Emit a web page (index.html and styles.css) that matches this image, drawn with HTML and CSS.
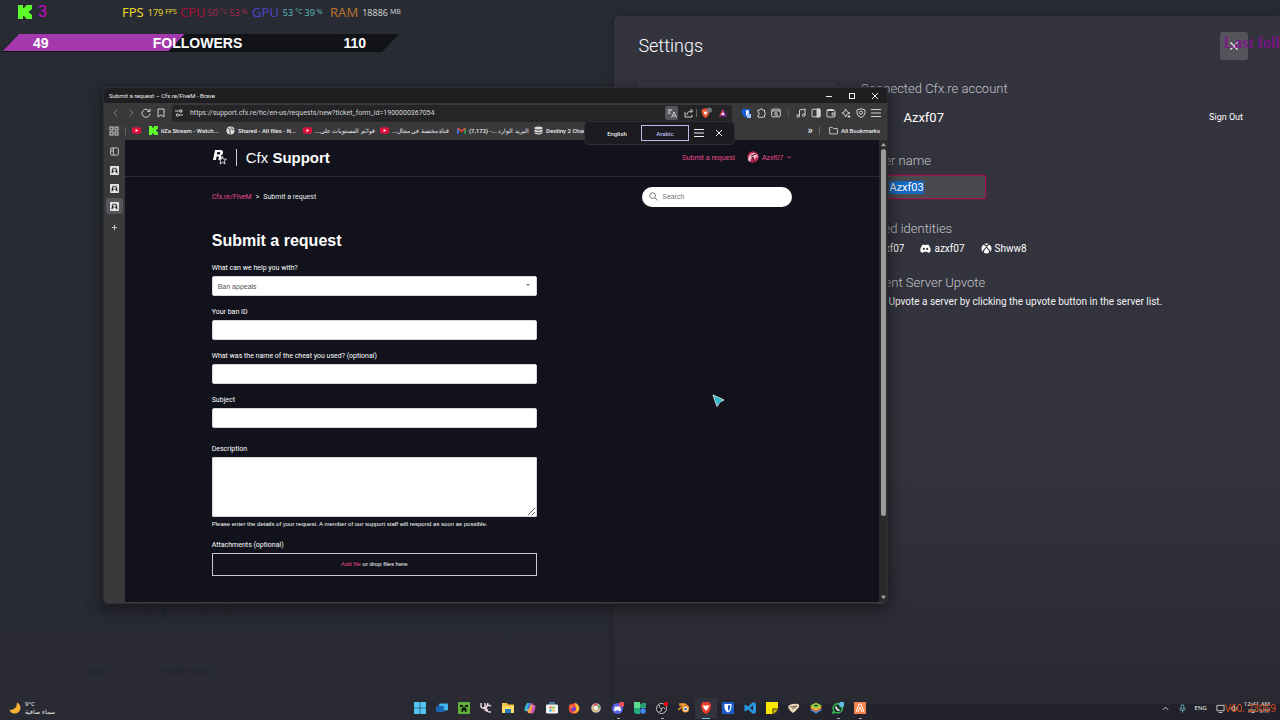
FILE: index.html
```html
<!DOCTYPE html>
<html lang="en">
<head>
<meta charset="utf-8">
<title>Desktop</title>
<link rel="stylesheet" href="styles.css">
</head>
<body>
<svg width="0" height="0" class="defs" aria-hidden="true">
  <symbol id="yt" viewBox="0 0 10 10"><rect x="0" y="1.5" width="10" height="7" rx="2" fill="#e0103a"/><path d="M4 3.4v3.2L6.8 5z" fill="#fff"/></symbol>
  <symbol id="kick" viewBox="0 0 14 14"><path d="M0 0h5v3h1.500V1.500H8V0h6v4.500h-1.500V6H11v2h1.500v1.500H14V14H8v-1.500H6.500V11H5v3H0z" fill="#5cfc2c"/></symbol>
  <symbol id="rage" viewBox="0 0 10 10"><rect width="10" height="10" rx="1" fill="#f2f2f2"/><path d="M1 8 2.500 2h5L9 8H6.300V6.500H3.700V8zM4 3.500v1.500h2V3.500z" fill="#111"/></symbol>
  <symbol id="x" viewBox="0 0 10 10"><path d="m2 2 6 6M8 2 2 8" stroke="currentColor" fill="none"/></symbol>
  <symbol id="menu" viewBox="0 0 10 10"><path d="M0 1.500h10M0 5h10M0 8.500h10" stroke="currentColor" fill="none"/></symbol>
</svg>
<main class="desktop">

  <section class="ghost" aria-hidden="true">
    <p class="ghost-title">Cosmic King of the Hill</p>
    <p class="ghost-row"><span>Legal</span><span>☆ Profile Editor</span></p>
  </section>

  <section class="settings">
    <header class="settings-head">
      <h2>Settings</h2>
      <button class="close" aria-label="Close settings"><svg><use href="#x"/></svg></button>
    </header>
    <div class="settings-body">
      <nav class="settings-nav"></nav>
      <div class="settings-main">
        <h3>Connected Cfx.re account</h3>
        <div class="account"><span class="avatar"></span><span class="account-name">Azxf07</span><button class="signout">Sign Out</button></div>
        <h3><label for="player">Player name</label></h3>
        <input id="player" class="player" value="Azxf03">
        <h3>Linked identities</h3>
        <div class="idents">
          <span class="first-ident">azxf07</span>
          <span><svg viewBox="0 0 12 12"><path d="M2.500 2.200 4.500 1.500l.5.8h2l.5-.8 2 .7L11.500 6v3.500l-2.700 1.300-.8-1.300H4l-.8 1.300L.5 9.500V6z" fill="#fff"/><circle cx="4.200" cy="6.500" r="1.200" fill="#33333d"/><circle cx="7.800" cy="6.500" r="1.200" fill="#33333d"/></svg>azxf07</span>
          <span><svg viewBox="0 0 12 12"><circle cx="6" cy="6" r="5.500" fill="#fff"/><path d="M2.500 1.500C4 1.700 5 2.600 6 3.300c1-.7 2-1.600 3.500-1.800M6 4.500C4 6 2.500 8.500 2.200 11M6 4.500c2 1.500 3.500 4 3.800 6.500" fill="none" stroke="#33333d" stroke-width="1.300"/></svg>Shww8</span>
        </div>
        <h3>Current Server Upvote</h3>
        <p class="upvote">Upvote a server by clicking the upvote button in the server list.</p>
      </div>
    </div>
  </section>

  <aside class="hud">
    <div class="hud-row">
      <svg class="hud-k"><use href="#kick"/></svg><b class="hud-3">3</b>
      <span class="stat fps"><b>FPS</b><i>179</i><small>FPS</small></span>
      <span class="stat cpu"><b>CPU</b><i>50</i><small>°C</small><i>53</i><small>%</small></span>
      <span class="stat gpu"><b>GPU</b><i>53</i><small>°C</small><i>39</i><small>%</small></span>
      <span class="stat ram"><b>RAM</b><i>18886</i><small>MB</small></span>
    </div>
    <div class="goal"><span>49</span><span>FOLLOWERS</span><span>110</span></div>
  </aside>
  <p class="last-follow">Last foll</p>

  <section class="window">
    <header class="titlebar">
      <span>Submit a request – Cfx.re/FiveM - Brave</span>
      <span class="winbtns">
        <button aria-label="Minimize"><svg viewBox="0 0 10 10"><path d="M2 5.500h6" stroke="currentColor"/></svg></button>
        <button aria-label="Maximize"><svg viewBox="0 0 10 10"><rect x="2.500" y="2.500" width="5" height="5" fill="none" stroke="currentColor"/></svg></button>
        <button aria-label="Close"><svg><use href="#x"/></svg></button>
      </span>
    </header>
    <div class="toolbar">
      <button class="dim" aria-label="Back"><svg viewBox="0 0 10 10"><path d="M6.500 1.500 3 5l3.500 3.500"/></svg></button>
      <button class="dim" aria-label="Forward"><svg viewBox="0 0 10 10"><path d="M3.500 1.500 7 5 3.500 8.500"/></svg></button>
      <button aria-label="Reload"><svg viewBox="0 0 10 10"><path d="M8.300 3A4 4 0 1 0 9 5.500M9 .8v2.700H6.300"/></svg></button>
      <button aria-label="Bookmark"><svg viewBox="0 0 10 10"><path d="M2 1h6v8L5 6.800 2 9z"/></svg></button>
      <div class="urlbar">
        <svg viewBox="0 0 10 10"><path d="M1 3h4M9 7H5M6.500 3H8M2 7h.5"/><circle cx="6.800" cy="3" r="1.300"/><circle cx="3.500" cy="7" r="1.300"/></svg>
        <input class="url" aria-label="Address" value="https://support.cfx.re/hc/en-us/requests/new?ticket_form_id=1900000367054">
        <button class="translate-btn" aria-label="Translate"><svg viewBox="0 0 10 10"><path d="M.5 2h5M3 1v1c0 2-1 3.500-2.500 4M1.500 3.500C2 5 3 5.500 4 6M4.500 9.500 7 4l2.500 5.500M5.300 8h3.400"/></svg></button>
        <button aria-label="Share"><svg viewBox="0 0 10 10"><path d="M1 4v5h7V7M3 7c0-3 2-4 5.500-4M6.500 1l2 2-2 2"/></svg></button>
        <span class="sep"></span>
        <button class="wide" aria-label="Shields"><svg viewBox="0 0 12 12"><path d="m2 2.500 2-1h3l2 1 .5 2L8 9l-2.500 2L3 9 1.500 4.500z" fill="#f0562c" stroke="none"/><path d="m3.500 4 2 1 2-1-1 3-1 1-1-1z" fill="#fff" stroke="none"/><circle cx="9.300" cy="3" r="2.600" fill="#77777b" stroke="none"/></svg></button>
        <button aria-label="Rewards"><svg viewBox="0 0 10 10"><path d="M5 1 1 8.500h8z" fill="#8a2ba6" stroke="none"/><path d="M5 1v4L1 8.500z" fill="#f04a28" stroke="none"/><path d="m5 4 1.600 3H3.400z" fill="#fff" stroke="none"/></svg></button>
      </div>
      <button aria-label="Bitwarden"><svg viewBox="0 0 10 10"><path d="M1 1h8v4.500Q8 8 5 9.500 2 8 1 5.500z" fill="#175ddc" stroke="none"/><path d="M5 2.200h2.700v3Q7 7 5 8z" fill="#fff" stroke="none"/><rect x="6" y="6" width="4" height="4" fill="#9cc4ff" stroke="none"/></svg></button>
      <button aria-label="Extensions"><svg viewBox="0 0 10 10"><path d="M2 2h2a1.200 1.200 0 0 1 2.400 0H8.500v2.500a1.100 1.100 0 0 1 0 2.200V9.200H2V7a1.300 1.300 0 0 0 0-2.600z"/></svg></button>
      <button aria-label="Tab search"><svg viewBox="0 0 10 10"><rect x=".7" y="1.200" width="8.600" height="7.600" rx="1"/><path d="M1 3h8M6 7l1 1"/><circle cx="5" cy="5.800" r="1.300"/></svg></button>
      <span class="sep gap"></span>
      <button aria-label="Music"><svg viewBox="0 0 10 10"><path d="M3.500 8V2L9 1v6"/><circle cx="2.200" cy="8" r="1.300"/><circle cx="7.700" cy="7.200" r="1.300"/></svg></button>
      <button aria-label="Side panel"><svg viewBox="0 0 10 10"><rect x="1" y="1.200" width="8" height="7.600" rx=".8"/><path d="M6 1h3v8H6z" fill="currentColor"/></svg></button>
      <button aria-label="Wallet"><svg viewBox="0 0 10 10"><path d="M1 2.500V8q0 1 1 1h6q1 0 1-1V3.500q0-1-1-1H1q0-1 1-1h5.500M9 5H6v2h3"/></svg></button>
      <button aria-label="Leo"><svg viewBox="0 0 10 10"><path d="M4.500 1 6 3.700 9 5 6 6.300 4.500 9 3.500 6.300 1 5l2.500-1.300z"/><path d="M8 7v3M6.500 8.500h3"/></svg></button>
      <button aria-label="VPN"><svg viewBox="0 0 10 10"><path d="M5 .7 9 2v3q0 3-4 4.500Q1 8 1 5V2z"/><circle cx="5" cy="4.700" r="1.600"/></svg></button>
      <button aria-label="Menu"><svg><use href="#menu"/></svg></button>
    </div>
    <nav class="bookmarks">
      <button aria-label="Apps"><svg viewBox="0 0 10 10"><rect x="1" y="1" width="3" height="3"/><rect x="6" y="1" width="3" height="3"/><rect x="1" y="6" width="3" height="3"/><rect x="6" y="6" width="3" height="3"/></svg></button>
      <span class="sep"></span>
      <a class="lone" href="#" aria-label="YouTube"><svg><use href="#yt"/></svg></a>
      <a href="#"><svg><use href="#kick"/></svg><span>iiZa Stream - Watch...</span></a>
      <a href="#"><svg viewBox="0 0 10 10"><circle cx="5" cy="5" r="4.500" fill="#ddd"/><path d="M2 2.500 5 4 4 6l1 3M6 1.500 7 4l2 .5" fill="none" stroke="#444"/></svg><span>Shared - All files - N...</span></a>
      <a href="#"><svg><use href="#yt"/></svg><span dir="rtl">قوائم المستويات على...</span></a>
      <a href="#"><svg><use href="#yt"/></svg><span dir="rtl">قناة مختصة في مجال...</span></a>
      <a href="#"><svg viewBox="0 0 10 10"><path d="M1 8.500v-6" stroke="#4285f4" stroke-width="1.800"/><path d="M9 8.500v-6" stroke="#34a853" stroke-width="1.800"/><path d="m1 2.500 4 3.300 4-3.300" fill="none" stroke="#ea4335" stroke-width="1.800"/></svg><span dir="rtl">البريد الوارد ...- (7,172)</span></a>
      <a href="#"><svg viewBox="0 0 10 10"><ellipse cx="5" cy="2.200" rx="4.500" ry="1.700" fill="#ddd"/><path d="M.5 4q4.500 2.500 9 0v2q-4.500 2.500-9 0zM.5 7q4.500 2.500 9 0v1q-4.500 3-9 0z" fill="#ddd"/></svg><span>Destiny 2 Char</span></a>
      <a class="late" href="#"><span dir="rtl">تمت مفتا</span></a>
      <button class="more" aria-label="More bookmarks">»</button>
      <span class="sep"></span>
      <a class="all" href="#"><svg viewBox="0 0 10 10"><path d="M.7 8.800V1.500h3L5 2.800h4.300v6z" fill="none" stroke="#ccc"/></svg><span>All Bookmarks</span></a>
    </nav>
    <div class="view">
      <nav class="tabs">
        <button aria-label="Toggle tabs"><svg viewBox="0 0 10 10"><rect x=".7" y="1" width="8.600" height="8" rx="1"/><path d="M3.800 1v8M1.500 3h1.500M1.500 5h1.500"/></svg></button>
        <button aria-label="Tab 1"><svg><use href="#rage"/></svg></button>
        <button aria-label="Tab 2"><svg><use href="#rage"/></svg></button>
        <button class="active" aria-label="Tab 3"><svg><use href="#rage"/></svg></button>
        <button aria-label="New tab"><svg viewBox="0 0 10 10"><path d="M5 2v6M2 5h6"/></svg></button>
      </nav>
      <div class="page">
        <header class="site-head">
          <div class="wrap">
            <a class="brand" href="#"><svg viewBox="0 0 15 16"><path d="M3 1h5.500q3 0 2.500 3-.4 2-2.400 2.500Q10 7 9.500 9L9 11H6.500l.5-2.500Q7 7.500 6 7.500H4.500L4 11H1zM5.300 3l-.5 2.500h2q1.300 0 1.500-1.200Q8.500 3 7.300 3z" fill="#fff"/><path d="m10.500 7.500 1 2.700h3l-2.300 1.800.8 3-2.500-1.700L8 15l.8-3-2.300-1.800h3z" fill="#11121b" stroke="#fff" stroke-width=".8"/></svg><i></i><span>Cfx <b>Support</b></span></a>
            <nav class="user"><a href="#">Submit a request</a><a href="#"><svg viewBox="0 0 12 12"><circle cx="6" cy="6" r="5.700" fill="#b92850"/><path d="M1 9Q2 2 7 2q4 1 4 5L9 5.500 8 9 6 5 4 8 3 11z" fill="#f4c4cf"/><path d="m5 6 3 5M9 3l-5 2" stroke="#471125"/></svg>Azxf07<svg class="chev" viewBox="0 0 6 6"><path d="m1 2.500 2 1.500 2-1.500" fill="none" stroke="currentColor" stroke-width=".8"/></svg></a></nav>
          </div>
        </header>
        <div class="wrap sub">
          <p class="crumbs"><a href="#">Cfx.re/FiveM</a><span>&gt;</span><span>Submit a request</span></p>
          <label class="search"><svg viewBox="0 0 10 10"><circle cx="4" cy="4" r="3.200"/><path d="m6.500 6.500 3 3"/></svg><input type="search" placeholder="Search" aria-label="Search"></label>
        </div>
        <div class="wrap">
          <form class="form">
            <h1>Submit a request</h1>
            <div class="field"><label for="topic">What can we help you with?</label><span class="pick"><select id="topic"><option>Ban appeals</option></select></span></div>
            <div class="field"><label for="ban">Your ban ID</label><input id="ban"></div>
            <div class="field"><label for="cheat">What was the name of the cheat you used? (optional)</label><input id="cheat"></div>
            <div class="field"><label for="subject">Subject</label><input id="subject"></div>
            <div class="field desc"><label for="desc">Description</label><textarea id="desc"></textarea><p>Please enter the details of your request. A member of our support staff will respond as soon as possible.</p></div>
            <div class="field"><span class="lab">Attachments (optional)</span><div class="drop"><a href="#">Add file</a> or drop files here</div></div>
          </form>
        </div>
      </div>
      <div class="scroll" aria-hidden="true"><svg viewBox="0 0 6 6"><path d="m3 1 3 4H0z" fill="#aaa"/></svg><i></i><svg viewBox="0 0 6 6"><path d="m3 5 3-4H0z" fill="#aaa"/></svg></div>
    </div>
    <div class="translate"><button>English</button><button class="on">Arabic</button><button class="ic" aria-label="Options"><svg><use href="#menu"/></svg></button><button class="ic" aria-label="Close"><svg><use href="#x"/></svg></button></div>
  </section>

  <svg class="cursor" viewBox="0 0 13 14"><path d="m1 1 11 5-4 2-3 4.500z" fill="#2cb6c9" stroke="#c9dde2"/><path d="m8 8 3.500-1.500-3 1.500L5.500 12z" fill="#3b6b75"/></svg>

  <footer class="taskbar">
    <button class="weather"><svg viewBox="0 0 12 12"><path d="M8 .5Q8 8 .5 8 2 12 6 11.500 11 11 11.500 6 11.500 2 8 .5z" fill="#f5b133"/></svg><span>9°C<br><bdi>سماء صافية</bdi></span></button>
    <nav class="apps">
      <button aria-label="Start"><svg viewBox="0 0 12 12"><path d="M0 0h5.700v5.700H0zM6.300 0H12v5.700H6.300zM0 6.300h5.700V12H0zM6.300 6.300H12V12H6.300z" fill="#52c4f5"/></svg></button>
      <button aria-label="Remote"><svg viewBox="0 0 12 12"><rect x="3" y="1.500" width="9" height="7" rx="1" fill="#42b5ef"/><rect x="0" y="4" width="8" height="6" rx="1" fill="#1767b4"/></svg></button>
      <button aria-label="Minecraft"><svg viewBox="0 0 12 12"><path d="M0 0h12v12H0z" fill="#60ae3c"/><path d="M2 3h3v2H2zM7 3h3v2H7zM5 5h2v1h1.500v4H7V8.500H5V10H3.500V6H5z" fill="#121c0d"/></svg></button>
      <button aria-label="UC"><svg viewBox="0 0 12 12"><path d="M1 1v3q0 2 2 2t2-2V1M11 4Q7 2 6 6q-1 4 5 4M3 6l5 2M8 1 5 9" fill="none" stroke="#e6d3d8" stroke-width="1.500"/></svg></button>
      <button aria-label="Files"><svg viewBox="0 0 12 12"><path d="M0 1h5l1 1.500h6V11H0z" fill="#f6c443"/><path d="M0 4h12v7H0z" fill="#ffda66"/><path d="M3 7h6v4H3z" fill="#2a7ab8"/></svg></button>
      <button aria-label="Copilot"><svg viewBox="0 0 12 12"><path d="M3 1h4L4.500 9H1Q0 8 1 5z" fill="#3cbdd4"/><path d="M7 1q2 0 2 2h2q1 1 0 4l-1 3q-1 1.500-3 1.500H5z" fill="#d158bd"/><path d="M5 3h4L6.500 11H4Q3 10 3.500 8z" fill="#f3a33e"/><path d="M5 1h2l-2 6H3z" fill="#4675e8"/></svg></button>
      <button aria-label="Store"><svg viewBox="0 0 12 12"><path d="M4 3V.7h4V3" fill="none" stroke="#60b8e9"/><rect y="2.500" width="12" height="9" rx="1" fill="#eef3f6"/><path d="M3.500 4.500h2v2h-2z" fill="#f35325"/><path d="M6.500 4.500h2v2h-2z" fill="#81bc06"/><path d="M3.500 7.500h2v2h-2z" fill="#05a6f0"/><path d="M6.500 7.500h2v2h-2z" fill="#ffba08"/></svg></button>
      <button aria-label="Firefox"><svg viewBox="0 0 12 12"><circle cx="6" cy="6.500" r="5.300" fill="#f54b37"/><path d="M7 .5q5 3 4.300 7Q9 12 5 10.500 9 9 7.500 5z" fill="#ffb82c"/><circle cx="5.500" cy="6.700" r="2.500" fill="#8139c9"/><path d="m1 2 2 1.500 3 1-3 2z" fill="#ff8928"/></svg></button>
      <button aria-label="Paint"><svg viewBox="0 0 12 12"><circle cx="6" cy="6" r="4.800" fill="#cdbfae"/><path d="m2 3 4-2 2 3z" fill="#d4535f"/><path d="m8 2 3 3-3 2z" fill="#62a868"/><path d="m2 6 3 4 2-3z" fill="#e5bd49"/><circle cx="6" cy="6" r="2" fill="#f4f4f4"/></svg></button>
      <button class="run" aria-label="Discord"><svg viewBox="0 0 12 12"><circle cx="5.500" cy="6.500" r="5.500" fill="#5661e9"/><path d="m3 4.500 5 0 1.200 4-2 .8-.7-1h-2l-.7 1-2-.8z" fill="#fff"/><circle cx="9.800" cy="2.200" r="2.700" fill="#e95160"/></svg></button>
      <button aria-label="Widgets"><svg viewBox="0 0 12 12"><path d="M0 0h6v6H0z" fill="#5edb91"/><path d="M6 2q5-2 6-1v5H6z" fill="#2d9d72"/><path d="M0 6h6v6q-6 0-6-2z" fill="#26aa7c"/><circle cx="9" cy="9" r="2.800" fill="#3d8bf2"/></svg></button>
      <button class="run" aria-label="OBS"><svg viewBox="0 0 12 12"><circle cx="5.500" cy="6.500" r="5" fill="#191a1f" stroke="#c9c9ce"/><path d="M5.500 6.500Q2 6 4 3M5.500 6.500Q8 4 9 7M5.500 6.500q1 3-2 3" fill="none" stroke="#c9c9ce"/><circle cx="10" cy="2" r="2.300" fill="#e60613"/></svg></button>
      <button aria-label="Blender"><svg viewBox="0 0 12 12"><path d="M0 8 6 3H2V2h5l4 3.500" fill="none" stroke="#f39a35" stroke-width="1.600"/><circle cx="7.500" cy="7" r="3.500" fill="#f39a35"/><circle cx="7.500" cy="7" r="2.200" fill="#fff"/><circle cx="7.500" cy="7" r="1.300" fill="#265787"/></svg></button>
      <button class="run on" aria-label="Brave"><svg viewBox="0 0 12 12"><path d="m1 2 2.500-2h5L11 2v3L9 10l-3 2-3-2-2-5z" fill="#e93c2c"/><path d="m3 3 3 .7L9 3 8.500 6 7 7.500 6 9 5 7.500 3.500 6z" fill="#fff"/></svg></button>
      <button aria-label="Bitwarden"><svg viewBox="0 0 12 12"><rect width="12" height="12" rx="1" fill="#1c5dcc"/><path d="M2.500 2h7v4Q9 9 6 10.500 3 9 2.500 6z" fill="#fff"/><path d="M6 3.200h2.300V6Q8 7.700 6 9z" fill="#1c5dcc"/></svg></button>
      <button aria-label="VS Code"><svg viewBox="0 0 12 12"><path d="M9 0 12 1.500v9L9 12 4 7.500 1.500 9.500.5 9V3l1-.5L4 4.500zM9 3.500 6 6l3 2.500z" fill="#2596dd"/></svg></button>
      <button aria-label="Notes"><svg viewBox="0 0 12 12"><path d="M0 0h12v12H0z" fill="#fde900"/><path d="M6.500 6.500H12V12H6.500z" fill="#33301c"/><path d="M7.500 7.500H12L7.500 12z" fill="#e0bd13"/></svg></button>
      <button aria-label="Shell"><svg viewBox="0 0 12 12"><path d="M0 5q2-4 10-3 2 1 1 3L7 9.500 4.500 11Q1 8 0 5z" fill="#ead9bd"/><path d="m2 5 7-1-5 3" fill="none" stroke="#766350"/></svg></button>
      <button aria-label="BlueStacks"><svg viewBox="0 0 12 12"><path d="m0 8 6-2.500L12 8l-6 3.500z" fill="#3293df"/><path d="m0 6.500 6-2.500 6 2.500L6 10z" fill="#e9573b"/><path d="m0 5 6-2.500L12 5 6 8.500z" fill="#f3cf3c"/><path d="m0 3.500 6-3 6 3-6 3.500z" fill="#88c93d"/><path d="m4 3.500 2-1 2 1-2 1z" fill="#263a17"/></svg></button>
      <button class="run" aria-label="WhatsApp"><svg viewBox="0 0 12 12"><path d="m0 12 1-3.500A5.300 5.300 0 1 1 3.500 11z" fill="#34c759"/><circle cx="5.600" cy="6.400" r="3.900" fill="#1c3a2a"/><path d="M4 4.500q0 3 3.500 4" fill="none" stroke="#fff" stroke-width="1.500"/><circle cx="9.700" cy="2.500" r="2.800" fill="#62bde8"/></svg></button>
      <button class="run" aria-label="Launcher"><svg viewBox="0 0 12 12"><rect width="12" height="12" fill="#f3824c"/><path d="M2 10 5 2h2l3 8M4 10l2-5 2 5" fill="none" stroke="#fff"/></svg></button>
    </nav>
    <div class="tray">
      <svg viewBox="0 0 10 10"><path d="m2 6.500 3-3 3 3"/></svg>
      <svg class="mic" viewBox="0 0 10 10"><rect x="3.500" y=".7" width="3" height="5" rx="1.500"/><path d="M2 4.500Q2 7.500 5 7.500T8 4.500M5 7.500v2"/></svg>
      <span class="lang">ENG</span>
      <svg viewBox="0 0 10 10"><path d="M1 1.500h8v6H1zM3 9.500h4"/></svg>
      <svg viewBox="0 0 10 10"><path d="M1 4h2l2-2v6L3 6H1zM7 3q2 2 0 4"/></svg>
      <span class="clock">12:41 AM<br>٢٥/٠٧/٢٣</span>
      <span class="orange">V60. 23069</span>
    </div>
  </footer>
</main>
<script>
  document.getElementById("player").select();
</script>
</body>
</html>
```
FILE: styles.css
```css
* { box-sizing: border-box; }
body { margin: 0; font-family: Roboto, "Noto Sans", sans-serif; color: #eee; }
h1, h2, h3, p { margin: 0; font-weight: 400; }
button { background: none; border: 0; padding: 0; color: inherit; font: inherit; display: flex; align-items: center; justify-content: center; }
a { color: inherit; text-decoration: none; }
input, textarea, select { font: inherit; outline: 0; }
svg { flex: none; }
.defs { position: absolute; }

.desktop { position: relative; height: 100vh; overflow: hidden; background: linear-gradient(#282b33, #292b34 60%, #292a34); }

.ghost { position: absolute; left: 82px; top: 600px; color: #23252d; font-size: 15px; }
.ghost-row { display: flex; gap: 40px; margin-top: 48px; font-size: 10px; }

/* settings panel */
.settings { position: absolute; left: 48%; right: 0; top: 16px; bottom: 16px; padding: 15px 32px 0 24px; border-radius: 5px 0 0 0; background: linear-gradient(#33343e, #33333d 65%, #2c2c36 90%, #292932); box-shadow: 0 0 8px #22232a; }
.settings-head { display: flex; justify-content: space-between; align-items: center; height: 29px; }
.settings-head h2 { font-size: 18px; font-weight: 300; color: #fff; }
.close { width: 28px; height: 28px; border-radius: 3px; background: #54555b; color: #fff; }
.close svg { width: 12px; height: 12px; }
.settings-body { display: grid; grid-template-columns: 198px 1fr; gap: 24px; padding-top: 21px; }
.settings-nav { height: 20px; margin-top: 2px; background: #3d3e46; }
.settings-main h3 { font-size: 13px; line-height: 16px; font-weight: 300; color: #c4c4ca; }
.account { display: flex; align-items: center; gap: 17px; height: 40px; margin-bottom: 16px; padding-right: 5px; font-size: 13px; color: #fff; }
.avatar { width: 26px; height: 26px; background: #a55; }
.signout { margin-left: auto; font-size: 9px; }
.player { display: block; width: 126px; height: 24px; margin: 6px 0 22px; padding: 0 0 0 28px; border: 1px solid #a3144c; border-radius: 2px; background: #4a4a4e; box-shadow: 0 0 2px #a3144c; color: #fff; font-size: 11px; }
.player::selection { background: #1769c4; color: #fff; }
.idents { display: flex; gap: 16px; height: 22px; margin-bottom: 16px; align-items: center; font-size: 10px; color: #fff; }
.idents span { display: flex; align-items: center; gap: 3px; }
.idents svg { width: 11px; height: 11px; }
.idents .first-ident { padding-left: 14px; }
.upvote { padding: 5px 0 0 28px; font-size: 10px; color: #f2f2f2; }

/* stream overlays */
.hud { position: absolute; left: 0; top: 0; width: 402px; }
.hud-row { display: flex; align-items: center; height: 24px; padding-left: 18px; font-family: "Noto Sans", sans-serif; }
.hud-k { width: 14px; height: 14px; }
.hud-3 { width: 90px; padding-left: 6px; color: #c20bc2; font: 16px "Liberation Sans", sans-serif; }
.stat { display: flex; align-items: center; gap: 2px; white-space: nowrap; flex: none; }
.stat b { font-size: 13px; font-weight: 400; margin-right: 2px; }
.stat i { font-size: 9px; font-style: normal; }
.stat small { font-size: 7px; padding-bottom: 2px; }
.fps { width: 58px; color: #e8d42c; }
.cpu { width: 72px; gap: 2px; color: #a5284d; }
.cpu b { color: #a80f38; margin: 0; }
.gpu { width: 78px; color: #57b8b4; }
.gpu b { color: #4b46c4; }
.ram { color: #c9c9cb; }
.ram b { color: #b77031; }
.goal { position: relative; display: grid; grid-template-columns: 1fr 2fr 1fr; align-items: center; height: 18px; margin: 10px 3px 0 2px; padding: 0 33px 1px 27px; color: #fff; font: bold 14px "Liberation Sans", sans-serif; text-align: center; clip-path: polygon(17px 0, 100% 0, calc(100% - 17px) 100%, 0 100%); background: #111317; }
.goal::before { content: ""; position: absolute; left: 0; top: 0; width: 46%; height: 17px; background: #a53aae; clip-path: polygon(0 0, 100% 0, calc(100% - 16px) 100%, 0 100%); }
.goal span { position: relative; }
.goal span:first-child { text-align: left; padding-left: 4px; }
.goal span:last-child { text-align: right; }
.last-follow { position: absolute; right: 0; top: 34px; white-space: nowrap; font: bold 16px "Liberation Serif", serif; color: #82108c; opacity: .85; }

/* browser window */
.window { position: absolute; left: 104px; right: 393px; top: 88px; bottom: 117px; display: flex; flex-direction: column; border-bottom: 1px solid #3a3a3d; border-radius: 4px; background: #39393c; box-shadow: 0 0 0 1px #2f2f33, 0 4px 14px 3px #15161acc; font-size: 7px; }
.titlebar { display: flex; justify-content: space-between; align-items: center; flex: none; height: 15px; padding-left: 5px; border-radius: 4px 4px 0 0; background: #1f1f22; font-size: 6px; }
.winbtns { display: flex; gap: 13px; padding-right: 7px; }
.winbtns svg { display: block; width: 10px; height: 10px; }
.toolbar { display: flex; align-items: center; flex: none; height: 20px; padding: 0 4px; }
.toolbar button { width: 15px; height: 15px; flex: none; }
.toolbar svg, .bookmarks button svg, .tabs svg { width: 10px; height: 10px; fill: none; stroke: #cfcfd2; color: #cfcfd2; }
.toolbar .dim { opacity: .45; }
.urlbar { display: flex; align-items: center; flex: 1; height: 17px; margin: 0 6px 0 4px; padding: 0 2px; border-radius: 3px; background: #252528; min-width: 0; }
.url { flex: 1; min-width: 0; border: 0; padding: 0 0 0 6px; background: none; color: #d5d5d8; font-size: 7px; }
.urlbar .translate-btn { width: 13px; height: 14px; margin-right: 3px; border-radius: 2px; background: #55555a; }
.urlbar .wide { width: 18px; }
.urlbar .wide svg { width: 12px; height: 12px; }
.sep { flex: none; width: 1px; height: 8px; background: #68686b; }
.toolbar .gap { margin: 0 4px 0 5px; background: #55555a; }
.bookmarks { display: flex; align-items: center; flex: none; gap: 9px; height: 17px; padding: 0 7px 2px 5px; font-size: 6px; font-weight: 500; white-space: nowrap; }
.bookmarks button svg { display: block; }
.bookmarks .sep { margin-left: -3px; }
.bookmarks a { display: flex; align-items: center; gap: 3px; width: 68px; flex: none; }
.bookmarks a svg { width: 9px; height: 9px; }
.bookmarks .lone { width: 8px; margin-left: -3px; }
.bookmarks .late { width: 78px; justify-content: flex-end; }
.bookmarks .more { margin-left: auto; font-size: 11px; }
.bookmarks .all { width: auto; }
.view { display: flex; flex: 1; min-height: 0; }
.tabs { display: flex; flex-direction: column; flex: none; gap: 2px; width: 21px; padding: 3px 2px; }
.tabs button { height: 16px; border-radius: 3px; }
.tabs svg { width: 9px; height: 9px; }
.tabs button:first-child { margin-bottom: 1px; }
.tabs button:last-child { margin-top: 3px; }
.tabs .active { background: #56565a; }
.page { flex: 1; min-width: 0; background: #11121b; font-family: "Liberation Sans", sans-serif; overflow: hidden; }
.wrap { width: 77%; margin: 0 auto; }
.site-head { border-bottom: 1px solid #292a33; }
.site-head .wrap { display: flex; align-items: center; justify-content: space-between; height: 36px; padding-bottom: 2px; }
.brand { display: flex; align-items: center; gap: 9px; color: #fff; font-size: 15px; }
.brand svg { width: 15px; height: 16px; }
.brand i { width: 1px; height: 17px; background: #ccc; }
.user { display: flex; gap: 12px; color: #e84a8a; }
.user a { display: flex; align-items: center; gap: 3px; }
.user svg { width: 12px; height: 12px; }
.user .chev { width: 6px; height: 6px; }
.sub { display: flex; align-items: center; justify-content: space-between; height: 39px; }
.crumbs { display: flex; gap: 4px; font-family: Roboto, sans-serif; }
.crumbs a, .drop a { color: #e84a8a; }
.search { display: flex; align-items: center; gap: 4px; width: 150px; height: 20px; padding: 0 7px; border-radius: 10px; background: #fff; }
.search svg { width: 9px; height: 9px; fill: none; stroke: #666; }
.search input { width: 100%; border: 0; padding: 0; background: none; color: #555; }
.form { width: 56%; }
h1 { margin: 15px 0 12px; font-size: 16px; line-height: 20px; font-weight: 700; color: #fff; }
.field { display: flex; flex-direction: column; margin-bottom: 11px; }
.field label, .lab { line-height: 10px; margin-bottom: 3px; color: #fff; font-family: Roboto, sans-serif; }
.field input, .field select { width: 100%; height: 20px; padding: 0 5px; border: 1px solid #d8d8dc; border-radius: 2px; background: #fff; color: #555; }
.field select { display: block; appearance: none; }
.pick { position: relative; }
.pick::after { content: ""; position: absolute; right: 7px; top: 8px; border: 2px solid transparent; border-top-color: #777; }
.field.desc { margin-top: 16px; }
.field textarea { height: 60px; border: 1px solid #d8d8dc; border-radius: 1px; background: #fff; resize: vertical; }
.desc p { margin-top: 2px; font-size: 6px; line-height: 10px; white-space: nowrap; color: #fff; }
.drop { height: 23px; border: 1px solid #c9c9d0; font-size: 6px; line-height: 21px; text-align: center; color: #fff; }
.scroll { display: flex; flex-direction: column; align-items: center; width: 8px; padding: 2px 0; gap: 2px; background: #2a2a2d; }
.scroll svg { width: 5px; height: 5px; }
.scroll i { width: 5px; height: 367px; margin-bottom: auto; border-radius: 3px; background: #9b9b9e; }
.translate { position: absolute; right: 152px; top: 33px; display: flex; align-items: center; width: 151px; height: 24px; padding: 0 4px 0 8px; border: 1px solid #303034; border-radius: 5px; background: #1b1b20; }
.translate button { flex: none; width: 48px; height: 16px; font-size: 6px; font-weight: 500; }
.translate .on { border: 1px solid #b9b9ea; color: #bdbdf2; }
.translate .ic { width: 20px; }
.translate svg { width: 10px; height: 10px; }
.cursor { position: absolute; left: 712px; top: 394px; width: 13px; height: 14px; }

/* taskbar */
.taskbar { position: absolute; left: 0; right: 0; bottom: 0; display: grid; grid-template-columns: 1fr auto 1fr; align-items: center; height: 24px; background: linear-gradient(90deg, #292a34 48%, #24252e 48%, #20212a) bottom / 100% 16px no-repeat; }
.weather { gap: 4px; padding-left: 9px; justify-self: start; text-align: left; font: 6px/8px "Noto Sans", sans-serif; }
.weather svg { width: 12px; height: 12px; }
.apps { display: flex; }
.apps button { position: relative; width: 22px; height: 21px; border-radius: 3px; }
.apps svg { width: 12px; height: 12px; }
.apps .on { background: #32333b; }
.run::after { content: ""; position: absolute; left: 10px; bottom: 0; width: 3px; height: 1px; background: #aaa; }
.run.on::after { left: 7px; width: 8px; background: #66c5f4; }
.tray { position: relative; display: flex; align-items: center; justify-self: end; gap: 5px; padding-right: 10px; font: 6px/7px "Noto Sans", sans-serif; }
.tray svg { width: 9px; height: 9px; fill: none; stroke: #ddd; }
.tray .mic { stroke: #6fb9c9; margin: 0 3px; }
.lang { margin-right: 4px; }
.clock { text-align: right; }
.orange { position: absolute; right: 4px; top: 0; font-size: 10px; line-height: 14px; color: #d1501d; white-space: nowrap; }
```
